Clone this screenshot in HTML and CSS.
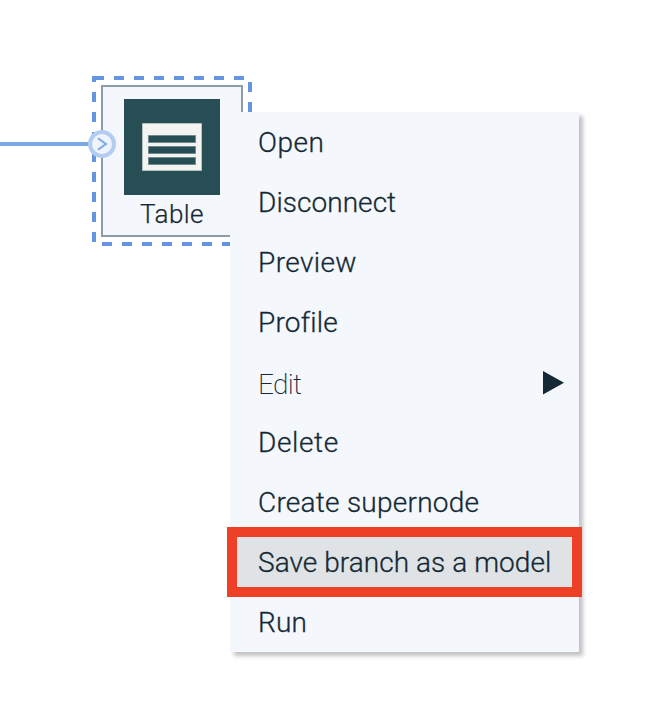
FILE: index.html
```html
<!DOCTYPE html>
<html lang="en">
<head>
<meta charset="utf-8">
<title>Flow editor</title>
<link rel="stylesheet" href="styles.css">
</head>
<body>
<main class="canvas">
  <svg class="flow" width="666" height="710" viewBox="0 0 666 710">
    <path class="link" d="M0 144H90"/>
    <rect class="node" x="102" y="86" width="140" height="150"/>
    <path class="selection" d="M94 78H250V244H94Z"/>
    <path class="tile" d="M124 99h96v96h-96z"/>
    <path class="sheet" d="M142.5 123.5h59v47h-59z"/>
    <path class="bars" d="M148.5 135.5h47v7h-47zM148.5 146.5h47v7h-47zM148.5 157.500h47v7h-47z"/>
    <circle class="port" cx="102" cy="144" r="12"/>
    <path class="chevron" d="M98 138.200L106 144L98 149.800"/>
    <text class="node-label" x="140" y="223">Table</text>
  </svg>
  <ul class="menu">
    <li class="item open">Open</li>
    <li class="item disconnect">Disconnect</li>
    <li class="item preview">Preview</li>
    <li class="item profile">Profile</li>
    <li class="item edit"><span>Edit</span><svg class="arrow" width="22" height="25" viewBox="0 0 22 25"><path d="M1 1L22 12.700L1 24.500Z"/></svg></li>
    <li class="item delete">Delete</li>
    <li class="item create">Create supernode</li>
    <li class="item save">Save branch as a model</li>
    <li class="item run">Run</li>
  </ul>
</main>
</body>
</html>
```
FILE: styles.css
```css
body { margin: 0; background: #fff; }
.canvas {
  position: relative;
  width: 666px;
  height: 710px;
  overflow: hidden;
  font-family: Roboto, "Liberation Sans", sans-serif;
  font-weight: 300;
  color: #152934;
}
.flow { display: block; }
.link { stroke: #7da8e8; stroke-width: 4; }
.node { fill: #f4f7fc; stroke: #8c9ba5; stroke-width: 2; }
.selection { fill: none; stroke: #6495e1; stroke-width: 4; stroke-dasharray: 10 10; }
.tile { fill: #284e55; }
.sheet { fill: #f3f3f2; stroke: #b4c2c2; }
.bars { fill: #284e55; stroke: #6f898c; }
.port { fill: #eef3fc; stroke: #b3cdf2; stroke-width: 4; }
.chevron { fill: none; stroke: #7da8e8; stroke-width: 2; }
.node-label { font-size: 26px; letter-spacing: 0.45px; fill: #152934; stroke: #152934; stroke-width: 0.25px; }
.menu {
  position: absolute;
  left: 230px;
  top: 112px;
  width: 349px;
  margin: 0;
  padding: 0;
  list-style: none;
  background: #f4f7fc;
  box-shadow: 4px 4px 4px rgba(0, 0, 0, 0.24);
}
.item {
  display: flex;
  align-items: center;
  box-sizing: border-box;
  height: 60px;
  padding: 0 15px 0 28px;
  font-size: 28px;
  letter-spacing: 0.5px;
  white-space: nowrap;
  -webkit-text-stroke: 0.3px #152934;
}
.disconnect { letter-spacing: 0.05px; }
.preview { letter-spacing: 0.4px; }
.profile { letter-spacing: 0.22px; }
.delete { letter-spacing: 0.62px; }
.create { letter-spacing: 0.25px; }
.run { letter-spacing: 0.2px; }
.edit {
  justify-content: space-between;
  padding-top: 4px;
  font-weight: 200;
  letter-spacing: -0.7px;
  -webkit-text-stroke: 0;
}
.arrow { margin-top: -4px; fill: #152934; }
.save {
  position: relative;
  height: 70px;
  margin: -5px -3px;
  padding: 0 0 0 21px;
  border: 10px solid #ee4026;
  background: #dfe3e6;
  letter-spacing: 0.05px;
}
```
